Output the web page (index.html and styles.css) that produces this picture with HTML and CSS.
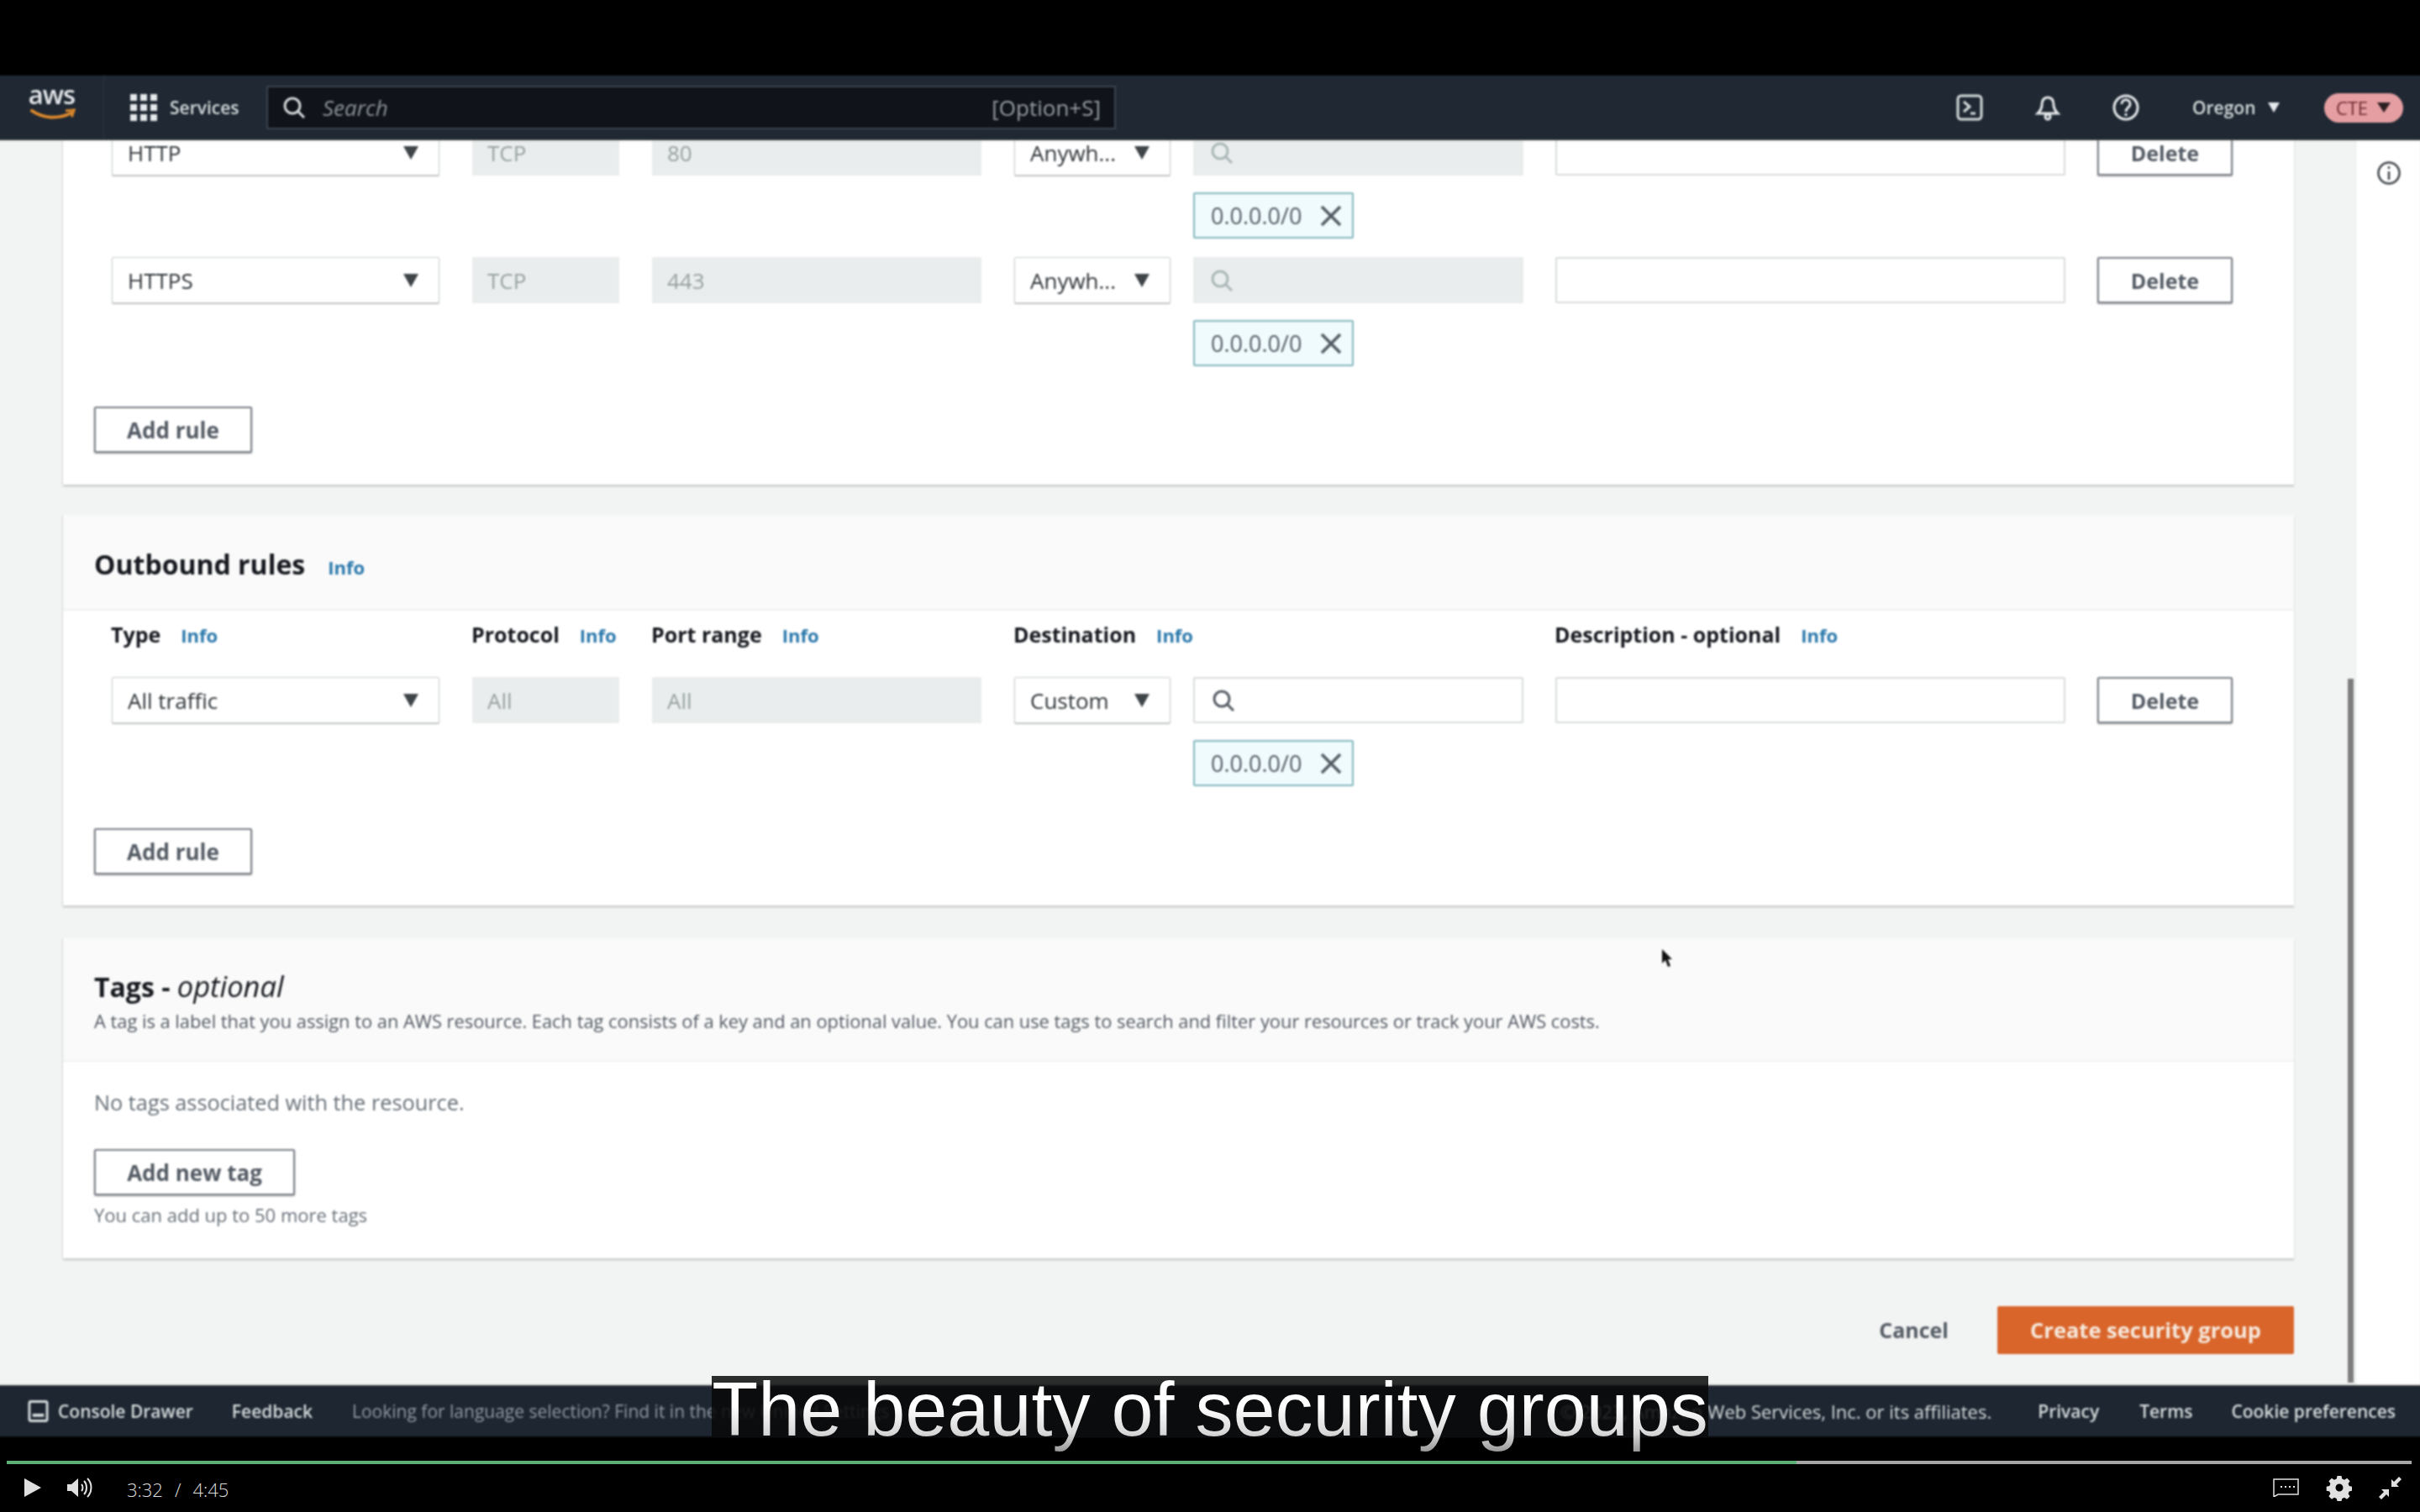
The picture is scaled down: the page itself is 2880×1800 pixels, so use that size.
FILE: index.html
```html
<!DOCTYPE html>
<html lang="en">
<head>
<meta charset="utf-8">
<title>Create security group</title>
<link rel="stylesheet" href="styles.css">
</head>
<body>
<div class="screen">
  <div class="letterbox"></div>

  <header class="nav soft">
    <div class="logo">
      <span class="logo-text">aws</span>
      <svg class="logo-smile" viewBox="0 0 60 16"><path d="M3 3c14 10 34 11 50 3" fill="none" stroke="#e08a2c" stroke-width="4" stroke-linecap="round"/><path d="M46 3l11-1-3 9" fill="none" stroke="#e08a2c" stroke-width="3"/></svg>
    </div>
    <div class="services">
      <svg class="grid-icon" viewBox="0 0 32 32" fill="#e6e9ec"><rect width="8" height="8"/><rect x="12" width="8" height="8"/><rect x="24" width="8" height="8"/><rect y="12" width="8" height="8"/><rect x="12" y="12" width="8" height="8"/><rect x="24" y="12" width="8" height="8"/><rect y="24" width="8" height="8"/><rect x="12" y="24" width="8" height="8"/><rect x="24" y="24" width="8" height="8"/></svg>
      <span>Services</span>
    </div>
    <div class="searchbar">
      <svg class="search-dark" viewBox="0 0 28 28" fill="none" stroke="#d5dbdb" stroke-width="3"><circle cx="12" cy="12" r="9"/><path d="M19 19l7 7"/></svg>
      <span class="search-ph">Search</span>
      <span class="search-key">[Option+S]</span>
    </div>
    <div class="nav-right">
      <svg class="nav-ico ico-term" viewBox="0 0 32 32" fill="none" stroke="#d5dbdb" stroke-width="3"><rect x="2" y="2" width="28" height="28" rx="4"/><path d="M9 9l7 6-7 6M17 23h6"/></svg>
      <svg class="nav-ico ico-bell" viewBox="0 0 32 32" fill="none" stroke="#e6e9ec" stroke-width="3"><path d="M16 4c-5 0-7 4-7 9 0 4-2 7-5 10h24c-3-3-5-6-5-10 0-5-2-9-7-9z"/><circle cx="16" cy="27" r="3"/></svg>
      <svg class="nav-ico ico-help" viewBox="0 0 32 32" fill="none" stroke="#e6e9ec" stroke-width="3"><circle cx="16" cy="16" r="14"/><path d="M11 12c0-7 10-7 10 0 0 4-5 4-5 9"/><path d="M16 23v3"/></svg>
      <span class="region">Oregon</span>
      <span class="caret caret-light"></span>
      <span class="pill">CTE<span class="caret caret-pill"></span></span>
    </div>
  </header>

  <div class="main soft">
    <main class="page">
      <section class="card card-clipped">
        <div class="rule rule-first">
          <div class="cell"><div class="control select w-type"><span>HTTP</span><span class="caret"></span></div></div>
          <div class="cell"><div class="control disabled w-proto">TCP</div></div>
          <div class="cell"><div class="control disabled w-port">80</div></div>
          <div class="cell"><div class="control select w-dest"><span>Anywh...</span><span class="caret"></span></div></div>
          <div class="cell"><div class="control disabled w-search"><svg class="search-light" viewBox="0 0 28 28" fill="none" stroke="#aab7b8" stroke-width="3"><circle cx="12" cy="12" r="9"/><path d="M19 19l7 7"/></svg></div></div>
          <div class="cell"><div class="control input w-desc"></div></div>
          <div class="cell"><button class="btn w-del">Delete</button></div>
          <div class="chip"><span>0.0.0.0/0</span><svg class="chip-x" viewBox="0 0 26 26" stroke="#545b64" stroke-width="3.5"><path d="M2 2l22 22M24 2L2 24"/></svg></div>
        </div>
        <div class="rule">
          <div class="cell"><div class="control select w-type"><span>HTTPS</span><span class="caret"></span></div></div>
          <div class="cell"><div class="control disabled w-proto">TCP</div></div>
          <div class="cell"><div class="control disabled w-port">443</div></div>
          <div class="cell"><div class="control select w-dest"><span>Anywh...</span><span class="caret"></span></div></div>
          <div class="cell"><div class="control disabled w-search"><svg class="search-light" viewBox="0 0 28 28" fill="none" stroke="#aab7b8" stroke-width="3"><circle cx="12" cy="12" r="9"/><path d="M19 19l7 7"/></svg></div></div>
          <div class="cell"><div class="control input w-desc"></div></div>
          <div class="cell"><button class="btn w-del">Delete</button></div>
          <div class="chip"><span>0.0.0.0/0</span><svg class="chip-x" viewBox="0 0 26 26" stroke="#545b64" stroke-width="3.5"><path d="M2 2l22 22M24 2L2 24"/></svg></div>
        </div>
        <div class="add-row first-add"><button class="btn w-add">Add rule</button></div>
      </section>

      <section class="card outbound">
        <div class="card-head head-outbound">
          <h2 class="title">Outbound rules</h2><a class="info info-title">Info</a>
        </div>
        <div class="labels">
          <div class="label">Type<a class="info">Info</a></div>
          <div class="label">Protocol<a class="info">Info</a></div>
          <div class="label">Port range<a class="info">Info</a></div>
          <div class="label">Destination<a class="info">Info</a></div>
          <div class="label"></div>
          <div class="label">Description - optional<a class="info">Info</a></div>
        </div>
        <div class="rule">
          <div class="cell"><div class="control select w-type"><span>All traffic</span><span class="caret"></span></div></div>
          <div class="cell"><div class="control disabled w-proto">All</div></div>
          <div class="cell"><div class="control disabled w-port">All</div></div>
          <div class="cell"><div class="control select w-dest"><span>Custom</span><span class="caret"></span></div></div>
          <div class="cell"><div class="control input w-search"><svg class="search-light" viewBox="0 0 28 28" fill="none" stroke="#545b64" stroke-width="3"><circle cx="12" cy="12" r="9"/><path d="M19 19l7 7"/></svg></div></div>
          <div class="cell"><div class="control input w-desc"></div></div>
          <div class="cell"><button class="btn w-del">Delete</button></div>
          <div class="chip"><span>0.0.0.0/0</span><svg class="chip-x" viewBox="0 0 26 26" stroke="#545b64" stroke-width="3.5"><path d="M2 2l22 22M24 2L2 24"/></svg></div>
        </div>
        <div class="add-row second-add"><button class="btn w-add">Add rule</button></div>
      </section>

      <section class="card tags">
        <div class="card-head head-tags">
          <h2 class="title">Tags - <em class="optional">optional</em></h2>
          <p class="desc">A tag is a label that you assign to an AWS resource. Each tag consists of a key and an optional value. You can use tags to search and filter your resources or track your AWS costs.</p>
        </div>
        <div class="tags-body">
          <p class="empty">No tags associated with the resource.</p>
          <button class="btn w-addtag">Add new tag</button>
          <p class="hint">You can add up to 50 more tags</p>
        </div>
      </section>

      <div class="actions">
        <button class="link-btn">Cancel</button>
        <button class="primary">Create security group</button>
      </div>
    </main>
    <aside class="side">
      <svg class="side-info" viewBox="0 0 30 30" fill="none" stroke="#3f4448" stroke-width="2.5"><circle cx="15" cy="15" r="12.5"/><path d="M15 13v10M15 7v3"/></svg>
    </aside>
    <div class="scroll-thumb"></div>
    <svg class="cursor" viewBox="0 0 14 24"><path d="M1 1v17l4-4 3 8 3-1-3-8h5z" fill="#111"/></svg>
  </div>

  <footer class="footer soft">
    <svg class="drawer-ico" viewBox="0 0 26 28" fill="none" stroke="#d5dbdb" stroke-width="3"><rect x="2" y="2" width="22" height="24" rx="2"/><rect x="6" y="17" width="14" height="4" fill="#d5dbdb" stroke="none"/></svg>
    <span class="foot-item">Console Drawer</span>
    <span class="foot-item foot-feedback">Feedback</span>
    <span class="foot-muted">Looking for language selection? Find it in the new Unified Settings</span>
    <span class="foot-spacer"></span>
    <span class="foot-copy">© 2023, Amazon Web Services, Inc. or its affiliates.</span>
    <span class="foot-item foot-privacy">Privacy</span>
    <span class="foot-item foot-terms">Terms</span>
    <span class="foot-item foot-cookie">Cookie preferences</span>
  </footer>

  <div class="player">
    <div class="progress"><div class="progress-fill"></div></div>
    <div class="controls">
      <svg class="pl-play" viewBox="0 0 20 22" fill="#e0e0e0"><path d="M0 0l20 11L0 22z"/></svg>
      <svg class="pl-vol" viewBox="0 0 30 26" fill="none" stroke="#e0e0e0" stroke-width="2"><path d="M0 9h5l8-7v22l-8-7H0z" fill="#e0e0e0" stroke="none"/><path d="M17 9c2 2 2 6 0 8M20 5c4 4 4 12 0 16M24 2c6 6 6 16 0 22"/></svg>
      <span class="pl-time">3:32<span class="pl-sep">/</span>4:45</span>
      <span class="pl-spacer"></span>
      <svg class="pl-cc" viewBox="0 0 31 22" fill="none" stroke="#e0e0e0" stroke-width="1.5"><path d="M1 1h29v18H6l-5 3z"/><path d="M9 10h2M14 10h2M19 10h2M24 10h2" stroke-width="2"/></svg>
      <svg class="pl-gear" viewBox="0 0 28 28"><path fill="#e0e0e0" fill-rule="evenodd" d="M11.500 0h5l.8 3.600 2.700 1.100 3.100-2 3.500 3.500-2 3.100 1.100 2.700 3.300.7v5l-3.300.8-1.100 2.700 2 3.100-3.500 3.500-3.100-2-2.700 1.100-.8 3.100h-5l-.8-3.100-2.700-1.100-3.100 2-3.500-3.500 2-3.100-1.100-2.700-3.600-.8v-5l3.600-.7 1.100-2.700-2-3.100 3.500-3.500 3.100 2 2.700-1.100zM14 9.500a4.500 4.500 0 1 0 0 9 4.500 4.500 0 0 0 0-9z"/></svg>
      <svg class="pl-exit" viewBox="0 0 27 27" fill="#e0e0e0"><path d="M24 0l3 3-6 6 3 3H15V3l3 3zM3 27l-3-3 6-6-3-3h9v9l-3-3z"/></svg>
    </div>
  </div>

  <div class="caption"><span class="caption-text">The beauty of security groups</span></div>
</div>
</body>
</html>
```

FILE: styles.css
```css
* { box-sizing: border-box; }
html, body { margin: 0; padding: 0; background: #000; }
body { font-family: "Open Sans", "Noto Sans", sans-serif; }
button { font-family: inherit; }
h2, p { margin: 0; }

.screen { position: relative; width: 2880px; height: 1800px; display: flex; flex-direction: column; background: #000; overflow: hidden; }
.letterbox { height: 90px; flex: none; }
/* Video softness; the bars bleed 6px past the frame so the blur leaves no dark edge */
.soft { filter: blur(0.9px); width: 2892px; margin-left: -6px; }

/* Top navigation */
.nav { height: 76px; flex: none; background: #1f2833; display: flex; align-items: center; color: #d5dbdb; position: relative; z-index: 2; box-shadow: 0 1px 2px #888; padding-left: 6px; }
.logo { width: 124px; height: 76px; border-right: 1px solid #2c3642; display: flex; flex-direction: column; align-items: center; padding-top: 3px; }
.logo-text { font-size: 31px; line-height: 38px; color: #e6e9ec; font-weight: 600; letter-spacing: -1px; }
.logo-smile { width: 56px; height: 15px; margin-top: -2px; margin-left: 2px; }
.services { display: flex; align-items: center; margin-left: 31px; width: 162px; gap: 15px; font-size: 21px; font-weight: 600; }
.grid-icon { width: 32px; height: 32px; }
.searchbar { width: 1011px; height: 52px; background: #10131a; border: 2px solid #3c434d; display: flex; align-items: center; padding: 0 16px 0 17px; }
.search-dark { width: 28px; height: 28px; margin-right: 20px; }
.search-ph { font-style: italic; font-size: 26px; color: #8b9198; flex: 1; }
.search-key { font-size: 26px; color: #979ca3; }
.nav-right { flex: 1; display: flex; align-items: center; padding-left: 1000px; }
.nav-ico { width: 32px; height: 32px; flex: none; }
.ico-bell { margin-left: 61px; }
.ico-help { margin-left: 61px; }
.region { font-size: 21px; font-weight: 600; margin-left: 63px; }
.caret { display: inline-block; width: 0; height: 0; border-left: 9px solid transparent; border-right: 9px solid transparent; border-top: 16px solid #3f4448; flex: none; }
.caret-light { border-top-color: #e6e9ec; border-left-width: 7px; border-right-width: 7px; border-top-width: 12px; margin-left: 14px; }
.pill { margin-left: 53px; width: 94px; height: 35px; border-radius: 18px; background: #e59fa3; color: #6e2a30; font-size: 22px; display: flex; align-items: center; justify-content: center; gap: 11px; }
.caret-pill { border-top-color: #2c1f22; border-left-width: 8px; border-right-width: 8px; border-top-width: 12px; }

/* Page */
.main { flex: none; height: 1484px; display: flex; position: relative; overflow: hidden; background: #f2f3f3; padding-left: 6px; }
.page { width: 2804px; flex: none; padding: 0 73px 0 75px; border-right: 1px solid #e4e6e6; }
.side { width: 76px; flex: none; background: #fff; display: flex; justify-content: center; padding-top: 25px; }
.side-info { width: 30px; height: 30px; margin-left: 1px; }
.scroll-thumb { position: absolute; left: 2800px; top: 642px; width: 7px; height: 838px; background: #7d7d7d; }
.cursor { position: absolute; left: 1983px; top: 963px; width: 14px; height: 24px; }

.card { background: #fff; box-shadow: 0 2px 2px #c4c6c6, -1px 0 1px #e2e4e4; }
.card-clipped { margin-top: -12px; height: 423px; }
.outbound { margin-top: 36px; height: 465px; }
.tags { margin-top: 39px; height: 381px; }

.card-head { background: #fafafa; border-bottom: 2px solid #f0f1f1; padding-left: 37px; }
.head-outbound { height: 114px; display: flex; align-items: center; padding-top: 6px; }
.head-tags { height: 147px; padding-top: 34px; }
.title { font-size: 32px; line-height: 46px; font-weight: 700; color: #16191f; }
.optional { font-weight: 400; font-size: 34.500px; }
.desc { font-size: 21.850px; line-height: 30px; color: #545b64; margin-top: 3px; white-space: nowrap; }
.info { font-size: 22px; font-weight: 700; color: #2a78ab; margin-left: 24px; }
.info-title { margin-left: 27px; margin-top: 5px; }

.labels { display: grid; grid-template-columns: 429px 214px 431px 213px 431px 700px; padding: 13px 0 0 57px; height: 79px; }
.label { font-size: 25px; line-height: 30px; font-weight: 700; color: #16191f; white-space: nowrap; }

.rule { display: grid; grid-template-columns: 429px 214px 431px 213px 431px 645px 161px; grid-template-rows: 55px 55px; row-gap: 20px; padding-left: 58px; margin-bottom: 23px; }
.rule-first { margin-bottom: 22px; }
.cell { height: 55px; }
.control { height: 55px; font-size: 26px; display: flex; align-items: center; color: #2f3438; }
.select { background: #fff; border: 1px solid #c9cdcd; box-shadow: 0 1px 1px #bbb; border-radius: 2px; justify-content: space-between; padding: 0 24px 0 18px; }
.disabled { background: #eaeded; color: #97a0a1; padding-left: 18px; }
.input { background: #fff; border: 2px solid #d9dcdc; border-radius: 2px; padding-left: 20px; }
.w-type { width: 390px; }
.w-proto { width: 175px; }
.w-port { width: 392px; }
.w-dest { width: 186px; }
.w-search { width: 393px; }
.w-desc { width: 607px; }
.w-del { width: 161px; }
.w-add { width: 188px; }
.w-addtag { width: 239px; }
.search-light { width: 28px; height: 28px; }
.disabled .search-light { margin-left: 2px; }

.btn { height: 55px; background: #fff; border: 2px solid #7a8088; border-radius: 2px; font-size: 25px; font-weight: 700; color: #545b64; padding: 0; box-shadow: 0 1px 2px #999; }
.chip { grid-row: 2; grid-column: 5; width: 191px; height: 55px; background: #f0fbfd; border: 2px solid #82b7bf; border-radius: 2px; display: flex; align-items: center; padding-left: 19px; font-size: 27px; color: #545b64; }
.chip-x { width: 26px; height: 26px; margin-left: 22px; }

.add-row { padding-left: 37px; }
.first-add { margin-top: 48px; }
.second-add { margin-top: 50px; }
.w-add, .w-addtag { font-size: 26px; }

.tags-body { padding: 31px 37px 0; }
.empty { font-size: 25.300px; line-height: 34px; color: #687078; }
.w-addtag { margin-top: 39px; display: block; }
.hint { font-size: 22px; line-height: 30px; color: #687078; margin-top: 8px; }

.actions { display: flex; justify-content: flex-end; align-items: center; margin-top: 57px; }
.link-btn { border: 0; background: none; font-size: 25px; font-weight: 700; color: #545b64; margin-right: 58px; padding: 0 0 2px; }
.primary { width: 353px; height: 57px; border: 0; background: #d9652b; color: #f6e9dc; font-size: 25.500px; font-weight: 700; border-radius: 2px; padding: 0 0 2px; }

/* Footer */
.footer { height: 60px; flex: none; background: #1e2632; display: flex; align-items: center; padding-left: 39px; font-size: 21px; color: #d5dbdb; white-space: nowrap; position: relative; z-index: 2; box-shadow: 0 -1px 2px #888; }
.drawer-ico { width: 25px; height: 28px; margin-right: 11px; }
.foot-item { font-weight: 600; }
.foot-feedback { margin-left: 46px; }
.foot-muted { margin-left: 47px; color: #8f98a2; }
.foot-spacer { flex: 1; }
.foot-copy { color: #d5dbdb; font-size: 22px; }
.foot-privacy { margin-left: 55px; }
.foot-terms { margin-left: 48px; }
.foot-cookie { margin-left: 46px; margin-right: 35px; }

/* Video player */
.player { flex: 1; display: flex; flex-direction: column; padding: 29px 10px 0 8px; }
.progress { height: 4px; background: #a6a6a6; }
.progress-fill { width: 2130px; height: 100%; background: #5fb077; }
.controls { display: flex; align-items: center; height: 56px; padding-left: 21px; color: #ddd; }
.pl-play { width: 20px; height: 22px; }
.pl-vol { width: 30px; height: 26px; margin-left: 31px; }
.pl-time { font-size: 22px; font-weight: 300; margin-left: 41px; padding-top: 3px; }
.pl-sep { margin: 0 14px; }
.pl-spacer { flex: 1; }
.pl-cc { width: 31px; height: 22px; }
.pl-gear { width: 28px; height: 28px; margin-left: 34px; overflow: visible; }
.pl-exit { width: 27px; height: 27px; margin-left: 33px; margin-right: 12px; }

/* Burned-in caption */
.caption { position: absolute; left: 847px; top: 1638px; width: 1186px; height: 72px; background: rgba(8, 8, 8, 0.85); z-index: 3; font-family: "Liberation Sans", Arial, sans-serif; font-size: 90px; line-height: 81px; white-space: nowrap; text-align: center; }
.caption-text { background: linear-gradient(180deg, #fff 45%, #d8d8d8 78%, #999 100%); -webkit-background-clip: text; background-clip: text; color: transparent; }
```
